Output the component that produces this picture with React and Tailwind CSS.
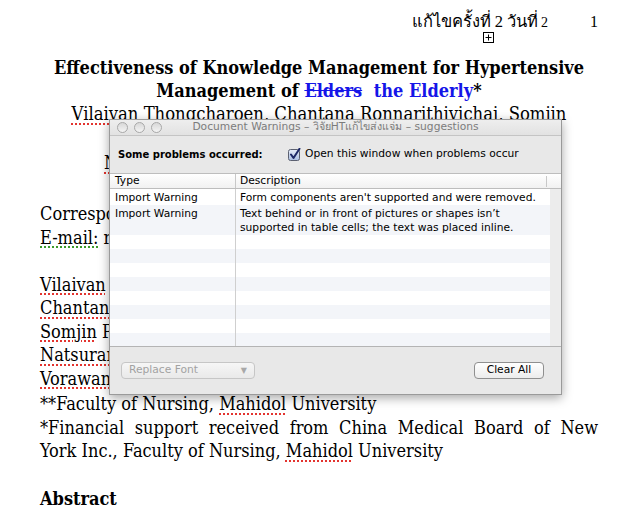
import React from "react";

const Sp = ({ children }) => (
  <span className="underline decoration-dotted decoration-[#e3342f] decoration-[1.5px] underline-offset-[3px]">
    {children}
  </span>
);
const Gr = ({ children }) => (
  <span className="underline decoration-dotted decoration-[#3a9a2a] decoration-[1.5px] underline-offset-[3px]">
    {children}
  </span>
);

function Check() {
  return (
    <svg width="13" height="13" viewBox="0 0 13 13">
      <defs>
        <linearGradient id="cb" x1="0" y1="0" x2="0" y2="1">
          <stop offset="0" stopColor="#e6ecf8" />
          <stop offset="1" stopColor="#a9bde2" />
        </linearGradient>
      </defs>
      <rect x="0.5" y="1.5" width="11" height="11" rx="2" fill="url(#cb)" stroke="#5b6070" />
      <path d="M3 6.5 L5.5 10 L11.5 0.8" fill="none" stroke="#1c2766" strokeWidth="2" strokeLinecap="round" strokeLinejoin="round" />
    </svg>
  );
}

function Dialog() {
  const rows = [
    { h: "h-[16px]", bg: "bg-white" },
    { h: "h-[30px]", bg: "bg-[#f3f5f9]" },
    { h: "h-[14px]", bg: "bg-white" },
    { h: "h-[14px]", bg: "bg-[#f3f5f9]" },
    { h: "h-[14px]", bg: "bg-white" },
    { h: "h-[14px]", bg: "bg-[#f3f5f9]" },
    { h: "h-[14px]", bg: "bg-white" },
    { h: "h-[14px]", bg: "bg-[#f3f5f9]" },
    { h: "h-[14px]", bg: "bg-white" },
    { h: "h-[14px]", bg: "bg-[#f3f5f9]" },
  ];
  return (
    <div className="absolute left-[109px] top-[119px] w-[453px] h-[276px] border border-[#9a9a9a] bg-[#e8e8e8] shadow-[0_3px_10px_rgba(0,0,0,0.35)] flex flex-col font-['DejaVu_Sans',sans-serif] text-[10.7px] text-black">
      {/* title bar */}
      <div className="relative h-[16px] shrink-0 bg-gradient-to-b from-[#eeeeee] to-[#e2e2e2] border-b border-[#c4c4c4] flex items-center">
        <div className="flex gap-[6px] pl-[7px]">
          <span className="w-[11px] h-[11px] rounded-full border border-[#a8a8a8] bg-gradient-to-b from-[#d8d8d8] to-[#f4f4f4]" />
          <span className="w-[11px] h-[11px] rounded-full border border-[#a8a8a8] bg-gradient-to-b from-[#d8d8d8] to-[#f4f4f4]" />
          <span className="w-[11px] h-[11px] rounded-full border border-[#a8a8a8] bg-gradient-to-b from-[#d8d8d8] to-[#f4f4f4]" />
        </div>
        <div className="absolute inset-0 flex items-center justify-center text-[#7c7c7c] leading-none">
          Document Warnings – วิจัยHTแก้ไขส่งแจ่ม – suggestions
        </div>
      </div>
      {/* top section */}
      <div className="h-[37px] shrink-0 flex items-center pl-[8px]">
        <span className="font-bold text-[10px] w-[170px]">Some problems occurred:</span>
        <span className="flex items-center gap-[4px]">
          <Check />
          <span>Open this window when problems occur</span>
        </span>
      </div>
      {/* table header */}
      <div className="h-[16px] shrink-0 border-t border-b border-[#bdbdbd] bg-gradient-to-b from-white to-[#f1f1f1] flex items-center leading-none">
        <div className="w-[126px] pl-[5px] border-r border-[#c8c8c8] h-full flex items-center">Type</div>
        <div className="w-[311px] pl-[4px] border-r border-[#c8c8c8] h-[11px] flex items-center">Description</div>
      </div>
      {/* table body */}
      <div className="h-[157px] shrink-0 flex overflow-hidden">
        <div className="w-[440px] flex flex-col bg-white">
          {rows.map((r, i) => (
            <div key={i} className={`${r.h} ${r.bg} shrink-0 flex leading-[14px]`}>
              <div className="w-[126px] pl-[5px] border-r border-[#cfcfcf] pt-[2px]">
                {i < 2 ? "Import Warning" : ""}
              </div>
              <div className="flex-1 pl-[4px] pt-[2px]">
                {i === 0 && "Form components aren't supported and were removed."}
                {i === 1 && (
                  <>
                    Text behind or in front of pictures or shapes isn’t
                    <br />
                    supported in table cells; the text was placed inline.
                  </>
                )}
              </div>
            </div>
          ))}
        </div>
        <div className="flex-1 bg-[#ececec]" />
      </div>
      {/* footer */}
      <div className="flex-1 border-t border-[#b4b4b4] flex items-center justify-between pl-[11px] pr-[17px]">
        <div className="w-[134px] h-[17px] rounded-[4px] border border-[#c6c6c6] bg-gradient-to-b from-[#f6f6f6] to-[#e9e9e9] flex items-center justify-between pl-[7px] pr-[7px] text-[#a2a2a2] leading-none">
          <span>Replace Font</span>
          <span className="text-[8px] text-[#a8a8a8]">▼</span>
        </div>
        <div className="w-[70px] h-[17px] rounded-[4px] border border-[#8f8f8f] bg-gradient-to-b from-white to-[#ececec] flex items-center justify-center leading-none">
          Clear All
        </div>
      </div>
    </div>
  );
}

export default function App() {
  return (
    <div className="relative w-[634px] h-[515px] bg-white overflow-hidden">
      <div className="pl-[40px] w-[598px] font-['DejaVu_Serif_Condensed','DejaVu_Serif',serif] text-[18px] text-black">
        {/* header */}
        <div className="h-[34px] pt-[10px] flex justify-end items-baseline font-['Liberation_Serif',serif] leading-[24px]">
          <span className="text-[16.5px] font-medium">แก้ไขครั้งที่ 2 วันที่ </span>
          <span className="text-[14px] ml-[3px]">2</span>
          <span className="text-[16px] ml-[42px]">1</span>
        </div>
        <div className="pl-[443px] mt-[-2px] h-[10px]">
          <svg width="11" height="11" viewBox="0 0 11 11" className="block">
            <rect x="0.5" y="0.5" width="10" height="10" fill="white" stroke="black" />
            <path d="M5.5 2.5 V8.5 M2.5 5.5 H8.5" stroke="black" />
          </svg>
        </div>
        {/* title */}
        <div className="mt-[14px] text-center font-bold leading-[23px] text-[18px]">
          <div>Effectiveness of Knowledge Management for Hypertensive</div>
          <div>
            Management of <span className="text-[#1515e8] line-through">Elders</span>
            {"  "}
            <span className="text-[#1515e8] ml-[6px]">the Elderly</span>*
          </div>
        </div>
        <div className="text-center leading-[23px] text-[18.3px]">
          <Sp>Vilaivan</Sp> Thongcharoen, Chantana Ronnarithivichai, Somjin
        </div>
        <div className="leading-[23px] h-[23px]" />
        <div className="leading-[23px] pl-[64px] mt-[3px]">
          <Sp>Natsuran</Sp> Wongprasert and Vorawan
        </div>
        <div className="leading-[23.5px] mt-[28px]">
          <div>Corresponding author: Vilaivan</div>
          <div>
            <Gr>E-mail:</Gr> rnvtc@mahidol.ac.th
          </div>
          <div className="h-[23.5px]" />
          <div>
            <Sp>Vilaivan</Sp> Thongcharoen**
          </div>
          <div>
            <Sp>Chantana</Sp> Ronnarith**
          </div>
          <div>
            <Sp>Somjin</Sp> Phuphaibul**
          </div>
          <div>
            <Sp>Natsuran</Sp> Wongprasert**
          </div>
          <div>
            <Sp>Vorawan</Sp> Phutthikhamin**
          </div>
          <div className="mt-[2px]">
            **Faculty of Nursing, <Sp>Mahidol</Sp> University
          </div>
          <div className="text-justify [text-align-last:justify]">
            *Financial support received from China Medical Board of New
          </div>
          <div>
            York Inc., Faculty of Nursing, <Sp>Mahidol</Sp> University
          </div>
          <div className="h-[24.5px]" />
          <div className="font-bold">Abstract</div>
        </div>
      </div>
      <Dialog />
    </div>
  );
}
